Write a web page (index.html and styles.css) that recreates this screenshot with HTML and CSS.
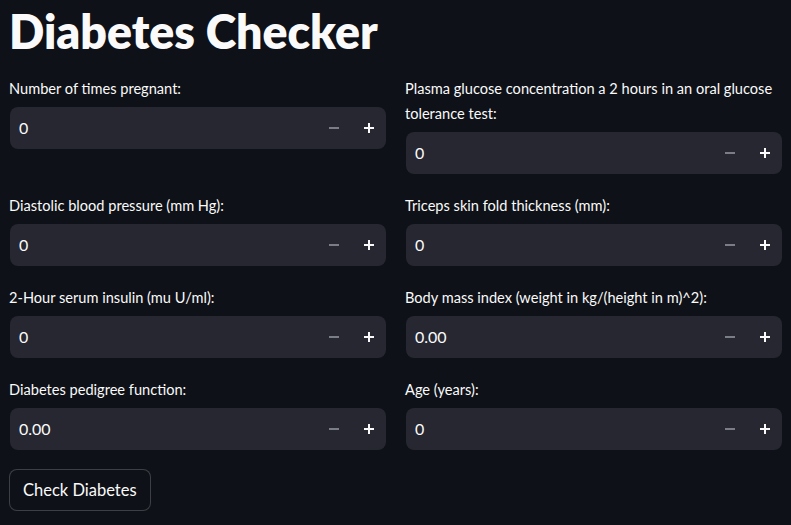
FILE: index.html
```html
<!DOCTYPE html>
<html>
<head>
<meta charset="utf-8">
<link rel="stylesheet" href="styles.css">
</head>
<body>
<main class="app">
  <h1 class="title">Diabetes Checker</h1>
  <div class="row">
    <div class="field">
      <label class="label">Number of times pregnant:</label>
      <div class="input"><span class="value">0</span><span class="step minus"></span><span class="step plus"></span></div>
    </div>
    <div class="field">
      <label class="label">Plasma glucose concentration a 2 hours in an oral glucose tolerance test:</label>
      <div class="input"><span class="value">0</span><span class="step minus"></span><span class="step plus"></span></div>
    </div>
  </div>
  <div class="row">
    <div class="field">
      <label class="label">Diastolic blood pressure (mm Hg):</label>
      <div class="input"><span class="value">0</span><span class="step minus"></span><span class="step plus"></span></div>
    </div>
    <div class="field">
      <label class="label">Triceps skin fold thickness (mm):</label>
      <div class="input"><span class="value">0</span><span class="step minus"></span><span class="step plus"></span></div>
    </div>
  </div>
  <div class="row">
    <div class="field">
      <label class="label">2-Hour serum insulin (mu U/ml):</label>
      <div class="input"><span class="value">0</span><span class="step minus"></span><span class="step plus"></span></div>
    </div>
    <div class="field">
      <label class="label">Body mass index (weight in kg/(height in m)^2):</label>
      <div class="input"><span class="value">0.00</span><span class="step minus"></span><span class="step plus"></span></div>
    </div>
  </div>
  <div class="row">
    <div class="field">
      <label class="label">Diabetes pedigree function:</label>
      <div class="input"><span class="value">0.00</span><span class="step minus"></span><span class="step plus"></span></div>
    </div>
    <div class="field">
      <label class="label">Age (years):</label>
      <div class="input"><span class="value">0</span><span class="step minus"></span><span class="step plus"></span></div>
    </div>
  </div>
  <button class="btn">Check Diabetes</button>
</main>
</body>
</html>
```

FILE: styles.css
```css
html, body {
  margin: 0;
  padding: 0;
  background: #0e1117;
}
body {
  font-family: "Lato", "Open Sans", sans-serif;
  color: #fafafa;
}
.app {
  padding: 0 9px 0 10px;
  display: flex;
  flex-direction: column;
  align-items: flex-start;
}
.title {
  margin: 0;
  padding: 5px 0 0 0;
  font-size: 46.4px;
  font-weight: 800;
  line-height: 52px;
  height: 76px;
  box-sizing: border-box;
  margin-left: -1px;
  white-space: nowrap;
}
.row {
  width: 100%;
  display: grid;
  grid-template-columns: 1fr 1fr;
  column-gap: 20px;
  margin-bottom: 19.5px;
}
.field {
  display: flex;
  flex-direction: column;
}
.label {
  font-size: 14.6px;
  line-height: 25px;
  margin: 0 0 5.5px -1px;
}
.input {
  height: 42px;
  background: #262730;
  border-radius: 8px;
  display: flex;
  align-items: center;
  padding: 0 0 0 9px;
}
.value {
  flex: 1;
  font-size: 16px;
}
.step {
  width: 35px;
  height: 42px;
  position: relative;
}
.step::before, .step::after {
  content: "";
  position: absolute;
  left: 50%;
  top: 50%;
  background: #fafafa;
}
.step::before {
  width: 10px;
  height: 2px;
  margin: -1px 0 0 -5px;
}
.minus::before { background: #7b7d86; }
.minus::after { display: none; }
.plus::after {
  width: 2px;
  height: 10px;
  margin: -5px 0 0 -1px;
}
.btn {
  margin: 0 0 0 -1px;
  height: 42px;
  padding: 0 13px;
  background: #0e1117;
  color: #fafafa;
  border: 1px solid rgba(250, 250, 250, 0.2);
  border-radius: 8px;
  font-family: inherit;
  font-size: 16.5px;
}
```
